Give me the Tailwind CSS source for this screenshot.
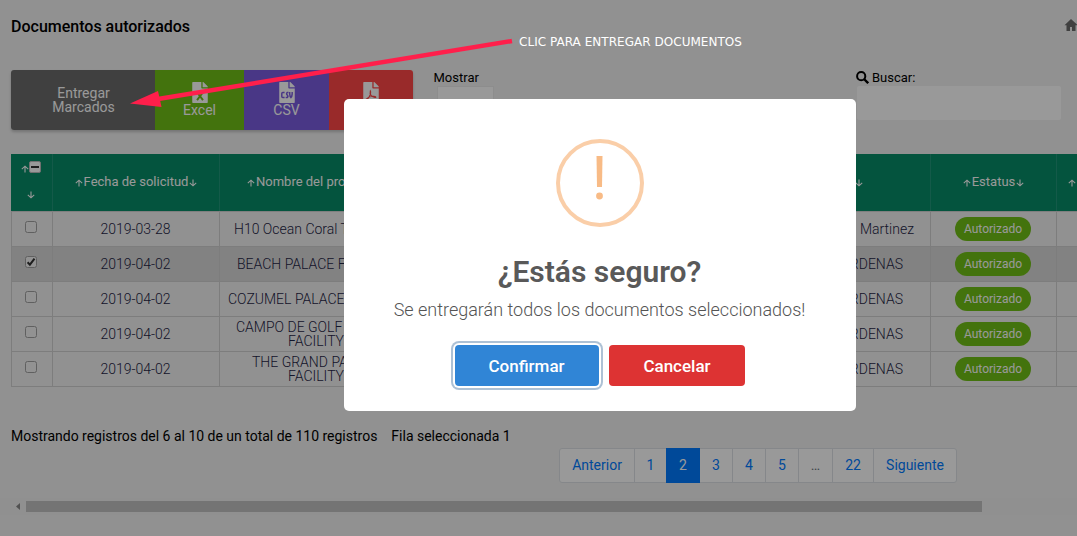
<!DOCTYPE html>
<html lang="es">
<head>
<meta charset="utf-8">
<title>Documentos autorizados</title>
<script src="https://cdn.jsdelivr.net/npm/@tailwindcss/browser@4"></script>
</head>
<body class="bg-[#f2f2f2]">
<svg class="hidden">
  <symbol id="up" viewBox="0 0 8 8"><path d="M4 7.500V1.200M.8 4.200l3.200-3 3.200 3" fill="none" stroke="currentColor" stroke-width="1.100"/></symbol>
  <symbol id="down" viewBox="0 0 8 8"><path d="M4 .5v6.300M.8 3.800l3.200 3 3.200-3" fill="none" stroke="currentColor" stroke-width="1.100"/></symbol>
  <symbol id="file" viewBox="0 0 384 512"><path fill="currentColor" d="M224 136V0H24C10.700 0 0 10.700 0 24v464c0 13.300 10.700 24 24 24h336c13.300 0 24-10.700 24-24V160H248c-13.200 0-24-10.800-24-24zm160-14.100v6.100H256V0h6.100c6.400 0 12.500 2.500 17 7l97.900 98c4.500 4.500 7 10.600 7 16.900z"/></symbol>
</svg>
<div class="relative flex h-[536px] w-[1077px] flex-col overflow-hidden font-['Roboto',sans-serif] text-sm text-black">

  <header class="flex h-[70px] shrink-0 items-start justify-between pl-[11px] pt-4">
    <h1 class="text-base font-medium leading-[22px]">Documentos autorizados</h1>
    <svg class="mt-[2px] h-[14px] w-[13px] text-[#6b6b6b]" viewBox="0 0 13 14"><path fill="currentColor" d="M7 1L.5 7.300h2V13H6V9h2v4h3.500V7.300H13V6.500z"/></svg>
  </header>

  <section class="flex h-[84px] shrink-0 items-start pl-[11px]">
    <div class="flex h-[60px] w-[402px] overflow-hidden rounded-[3px] text-sm leading-[14px] text-white shadow-[0_2px_3px_rgba(0,0,0,0.2)]">
      <div class="flex w-36 items-center justify-center bg-[#6b6b6b] pl-px text-center">Entregar<br>Marcados</div>
      <div class="flex w-[89px] flex-col items-center bg-[#71c016] pt-3">
        <svg class="h-[21px] w-4" viewBox="0 0 384 512"><use href="#file" width="384" height="512"/><path d="M120 250l145 190M265 250L120 440" stroke="#71c016" stroke-width="48" fill="none"/></svg>
        <span>Excel</span>
      </div>
      <div class="flex w-[85px] flex-col items-center bg-[#7b5ce0] pt-3">
        <svg class="h-[21px] w-4" viewBox="0 0 384 512"><use href="#file" width="384" height="512"/><path d="M133 255H90q-25 0-25 25v75q0 25 25 25h43M228 255h-30q-32 30 0 60t0 65h-38M258 245v50q5 60 30 85q25-25 30-85v-50" stroke="#7b5ce0" stroke-width="36" fill="none"/></svg>
        <span>CSV</span>
      </div>
      <div class="flex w-[84px] flex-col items-center bg-[#ff4747] pt-3">
        <svg class="h-[21px] w-4" viewBox="0 0 384 512"><use href="#file" width="384" height="512"/><path d="M175 215q-20 65 20 115 50 60 115 45 5-35-85-25-95 10-150 65 20 35 70-50 60-100 30-150z" stroke="#ff4747" stroke-width="25" fill="none"/></svg>
        <span>PDF</span>
      </div>
    </div>
    <div class="ml-5 w-[423px] text-[13px] leading-[15px]">
      <div class="pl-[0.500px]">Mostrar</div>
      <div class="ml-1 mt-px h-[34px] w-[57px] border border-[#ececec] bg-white"></div>
    </div>
    <div class="w-[206px] text-[13px] leading-[15px]">
      <div class="flex items-center gap-[3px]"><svg class="h-[13px] w-[13px]" viewBox="0 0 13 13"><circle cx="5.200" cy="5.200" r="4.100" fill="none" stroke="currentColor" stroke-width="2"/><path d="M8 8l4.200 4.200" stroke="currentColor" stroke-width="2.400"/></svg><span>Buscar:</span></div>
      <div class="ml-px mt-px h-[34px] w-[204px] rounded-[2px] bg-white"></div>
    </div>
  </section>

  <section class="ml-[11px] shrink-0 font-light text-[#1f2546]">
    <div class="grid h-[57px] grid-cols-[42px_167px_194px_517px_126px_60px] bg-[#088c68] text-[13px] font-normal text-white">
      <div class="flex flex-col items-center border-r border-[#22977a] pr-px pt-[7px]">
        <div class="flex items-center"><svg class="mt-1 size-2"><use href="#up"/></svg><svg class="size-3" viewBox="0 0 12 12"><rect x=".5" y=".5" width="11" height="11" rx="1.500" fill="#fff" stroke="#bbb"/><path d="M2 6h8" stroke="#333" stroke-width="2"/></svg></div>
        <svg class="mt-[18px] size-2"><use href="#down"/></svg>
      </div>
      <div class="flex items-center justify-center gap-px border-r border-[#22977a]"><svg class="size-2"><use href="#up"/></svg>Fecha de solicitud<svg class="size-2"><use href="#down"/></svg></div>
      <div class="flex items-center gap-px whitespace-nowrap pl-[27px]"><svg class="size-2"><use href="#up"/></svg>Nombre del proy</div>
      <div class="flex items-center justify-end border-r border-[#22977a] pr-[67px]"><svg class="size-2"><use href="#down"/></svg></div>
      <div class="flex items-center justify-center gap-px border-r border-[#22977a]"><svg class="size-2"><use href="#up"/></svg>Estatus<svg class="size-2"><use href="#down"/></svg></div>
      <div class="flex items-center pl-[11px]"><svg class="size-2"><use href="#up"/></svg></div>
    </div>
    <div id="rows" class="border-t border-[#d4d4d4]"></div>
  </section>

  <section class="flex h-[61px] shrink-0 items-end gap-[14px] pb-1 pl-[11px] leading-[16px] tracking-[-0.008px]"><span>Mostrando registros del 6 al 10 de un total de 110 registros</span><span>Fila seleccionada 1</span></section>

  <nav class="ml-[559px] flex h-[35px] w-[398px] shrink-0 rounded-[3px] border border-[#dee2e6] bg-white text-center leading-[33px] text-[#007bff]">
    <span class="w-[75px] border-r border-[#dee2e6]">Anterior</span>
    <span class="w-[31px]">1</span>
    <span class="-my-px w-[34px] bg-[#007bff] leading-[35px] text-white">2</span>
    <span class="w-[33px] border-r border-[#dee2e6]">3</span>
    <span class="w-[33px] border-r border-[#dee2e6]">4</span>
    <span class="w-[33px] border-r border-[#dee2e6]">5</span>
    <span class="w-[34px] border-r border-[#dee2e6] text-[#6c757d]">…</span>
    <span class="w-[41px] border-r border-[#dee2e6]">22</span>
    <span class="flex-1">Siguiente</span>
  </nav>

  <div class="mt-[15px] flex h-[17px] shrink-0 items-center bg-[#f1f1f1] pl-4">
    <svg class="h-[7px] w-1" viewBox="0 0 4 7"><path d="M4 0v7L0 3.500z" fill="#888"/></svg>
    <div class="ml-[6px] h-[11px] w-[956px] bg-[#c1c1c1]"></div>
  </div>

  <div class="absolute inset-0 bg-black/40"></div>

  <div class="absolute left-[344px] top-[99px] flex h-[312px] w-[512px] flex-col items-center rounded-[5px] bg-white pt-10">
    <svg class="size-[88px]" viewBox="0 0 88 88"><circle cx="44" cy="44" r="42" fill="none" stroke="#facea8" stroke-width="4"/><path d="M40.500 17h6l-.5 31h-5z" fill="#f8bb86"/><circle cx="43.500" cy="57" r="3.400" fill="#f8bb86"/></svg>
    <h2 class="mt-[27px] pr-px text-[30px] font-semibold leading-9 text-[#595959]">¿Estás seguro?</h2>
    <p class="mt-[9px] pr-px text-lg font-light leading-[22px] text-[#545454]">Se entregarán todos los documentos seleccionados!</p>
    <div class="mt-6 flex gap-[10px] text-[17px] font-medium leading-[41px] text-white">
      <button class="h-[41px] w-36 rounded-[4px] bg-[#3085d6] pr-px pt-px shadow-[0_0_0_2px_#fff,0_0_0_4px_rgba(50,100,150,0.4)]">Confirmar</button>
      <button class="h-[41px] w-[136px] rounded-[4px] bg-[#dd3333] pt-px">Cancelar</button>
    </div>
  </div>

  <svg class="absolute left-0 top-0 h-28 w-[520px]" viewBox="0 0 520 112"><path d="M512 41L158 99" stroke="#ff1f4b" stroke-width="4.500"/><path d="M130 103.500L158 91l3.500 16z" fill="#ff1f4b"/></svg>
  <div class="absolute left-[519px] top-[34px] whitespace-nowrap font-['DejaVu_Sans',sans-serif] text-xs leading-4 tracking-[0.035px] text-white">CLIC PARA ENTREGAR DOCUMENTOS</div>
</div>

<script>
  const rows = [
    ['2019-03-28', 'H10 Ocean Coral T', 'pl-[14px]', 'Martinez', 'pr-[16px]'],
    ['2019-04-02', 'BEACH PALACE FA', 'pl-[17px]', 'CARDENAS', 'pr-[27px]'],
    ['2019-04-02', 'COZUMEL PALACE', 'pl-[8px]', 'CARDENAS', 'pr-[27px]'],
    ['2019-04-02', 'CAMPO DE GOLF', 'pl-[16px]', 'CARDENAS', 'pr-[27px]', 'FACILITY'],
    ['2019-04-02', 'THE GRAND PAL', 'pl-[32px]', 'CARDENAS', 'pr-[27px]', 'FACILITY']
  ];
  document.getElementById('rows').innerHTML = rows.map((r, i) => `
    <div class="grid h-[35px] grid-cols-[42px_167px_194px_517px_126px_60px] border-b border-[#d0d0d0] leading-[14px] ${i === 1 ? 'bg-[#d9d9d9]' : ''}">
      <div class="flex items-start justify-center border-x border-[#d0d0d0] pr-[2px] pt-[9px]"><svg class="size-3" viewBox="0 0 12 12"><rect x=".5" y=".5" width="11" height="11" rx="2" fill="#f4f4f4" stroke="#a0a0a0"/>${i === 1 ? '<path d="M2.600 6.200l2.300 2.500 4.600-6" fill="none" stroke="#333" stroke-width="2"/>' : ''}</svg></div>
      <div class="flex items-center justify-center border-r border-[#d0d0d0] pr-px">${r[0]}</div>
      <div class="flex flex-col justify-center whitespace-nowrap"><span class="${r[2]}">${r[1]}</span>${r[5] ? `<span class="pl-[68px]">${r[5]}</span>` : ''}</div>
      <div class="flex items-center justify-end border-r border-[#d0d0d0] ${r[4]}">${r[3]}</div>
      <div class="flex items-center justify-center border-r border-[#d0d0d0] pr-px"><span class="h-6 w-[76px] rounded-full bg-[#71c016] text-center text-xs font-normal leading-6 text-white">Autorizado</span></div>
      <div></div>
    </div>`).join('');
</script>
</body>
</html>
